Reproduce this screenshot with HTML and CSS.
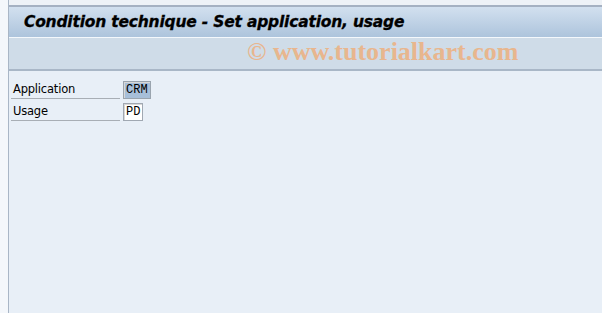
FILE: index.html
```html
<!DOCTYPE html>
<html>
<head>
<meta charset="utf-8">
<link rel="stylesheet" href="styles.css">
</head>
<body>
<div class="gutter"></div>
<div class="main">
  <div class="topstrip"></div>
  <div class="titlebar"><h1 class="title">Condition technique - Set application, usage</h1></div>
  <div class="toolbar"><span class="watermark">© www.tutorialkart.com</span></div>
  <div class="content">
    <div class="row">
      <span class="label">Application</span>
      <span class="field selected">CRM</span>
    </div>
    <div class="row">
      <span class="label">Usage</span>
      <span class="field">PD</span>
    </div>
  </div>
</div>
</body>
</html>
```
FILE: styles.css
```css
html, body {
  margin: 0;
  padding: 0;
  width: 602px;
  height: 313px;
  overflow: hidden;
}
body {
  display: flex;
  background: #e8eff7;
  font-family: Tahoma, "DejaVu Sans", sans-serif;
}
.gutter {
  width: 8px;
  flex: none;
  background: #f4f7fb;
}
.main {
  flex: 1;
  display: flex;
  flex-direction: column;
  border-left: 1px solid #a9b6c6;
}
.topstrip {
  height: 5px;
  background: #eef2f7;
  border-bottom: 2px solid #a5b1c2;
}
.titlebar {
  height: 30px;
  background: linear-gradient(#d2e0ef, #adc4dc);
  border-bottom: 1px solid #f4f8fc;
  display: flex;
  align-items: center;
  padding-left: 15px;
}
.title {
  margin: 0;
  font-family: "DejaVu Sans", sans-serif;
  font-size: 15.5px;
  font-weight: bold;
  font-style: italic;
  color: #000;
  letter-spacing: -0.2px;
  -webkit-text-stroke: 0.3px #000;
}
.toolbar {
  height: 31px;
  background: #cfdce8;
  border-bottom: 2px solid #a9b7c7;
  display: flex;
  align-items: center;
  padding-left: 238px;
}
.watermark {
  font-family: "Liberation Serif", serif;
  font-weight: bold;
  font-size: 26px;
  color: #e8b68e;
  margin-top: -3px;
  white-space: nowrap;
}
.content {
  padding: 10px 0 0 2px;
  display: flex;
  flex-direction: column;
  gap: 4px;
}
.row {
  display: flex;
  align-items: flex-end;
  height: 18px;
}
.label {
  width: 109px;
  padding-left: 2px;
  padding-top: 1px;
  box-sizing: border-box;
  border-bottom: 1px solid #a8aeb5;
  font-family: "DejaVu Sans", sans-serif;
  font-size: 11.5px;
  letter-spacing: -0.2px;
  color: #000;
  line-height: 17px;
  margin-right: 3px;
}
.field {
  height: 18px;
  box-sizing: border-box;
  border: 1px solid #a0a8b2;
  background: #fff;
  font-family: "Liberation Mono", monospace;
  font-size: 12px;
  line-height: 16px;
  padding: 0 2px;
  color: #000;
  box-shadow: inset 1px 1px 0 #d8d8d8;
}
.field.selected {
  background: #a7bfd9;
  border-color: #9aa4ae;
}
```
